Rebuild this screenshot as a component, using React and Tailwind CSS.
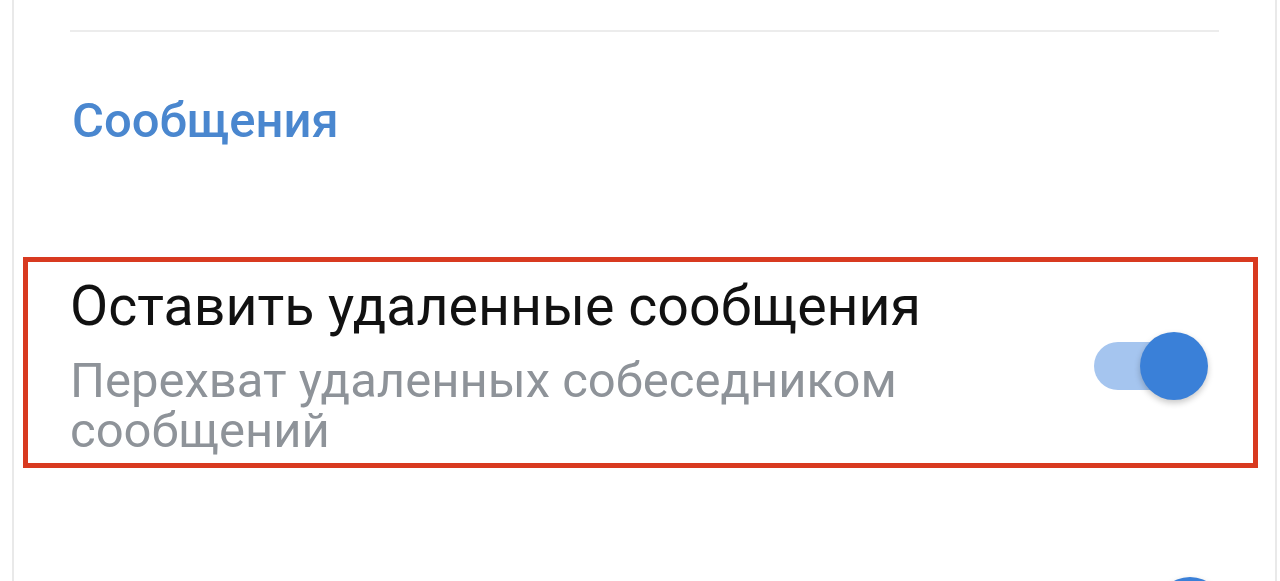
import React from 'react';

const font = { fontFamily: 'Roboto, "Noto Sans", sans-serif' };

// Material style switch, on state
function Toggle() {
    return (
        <div className="relative w-[114px] h-[68px] shrink-0">
            <div className="absolute left-0 top-[10px] w-[96px] h-[48px] rounded-full bg-[#a5c5ef]" />
            <div className="absolute right-0 top-0 w-[68px] h-[68px] rounded-full bg-[#3a80d8] shadow-[0_3px_6px_rgba(0,0,0,0.22)]" />
        </div>
    );
}

export default function App() {
    return (
        <div className="w-full h-[581px] overflow-hidden bg-white" style={font}>
            <div className="ml-[12px] w-[1265px] h-full border-x-2 border-[#e9e9e9] bg-white">
                {/* Divider */}
                <div className="px-[56px] pt-[30px]">
                    <div className="h-[2px] bg-[#ececec]" />
                </div>

                {/* Section header */}
                <div className="px-[58px] pt-[61px]">
                    <h2 className="text-[49px] leading-[56px] font-medium text-[#4a87cf]">Сообщения</h2>
                </div>

                {/* Highlighted setting */}
                <div className="mt-[108px] ml-[9px] mr-[17px] h-[211px] border-[5px] border-[#d83a20] flex items-start justify-between pl-[42px] pr-[45px]">
                    <div className="pt-[13px]">
                        <div className="text-[55.5px] leading-[64px] text-[#111111]">Оставить удаленные сообщения</div>
                        <div className="mt-[17px] text-[49px] leading-[50px] text-[#8e9399] w-[880px]">Перехват удаленных собеседником сообщений</div>
                    </div>
                    <div className="pt-[70px]">
                        <Toggle />
                    </div>
                </div>

                {/* Next setting, cut off */}
                <div className="flex justify-end pr-[51px] pt-[109px]">
                    <Toggle />
                </div>
            </div>
        </div>
    );
}
